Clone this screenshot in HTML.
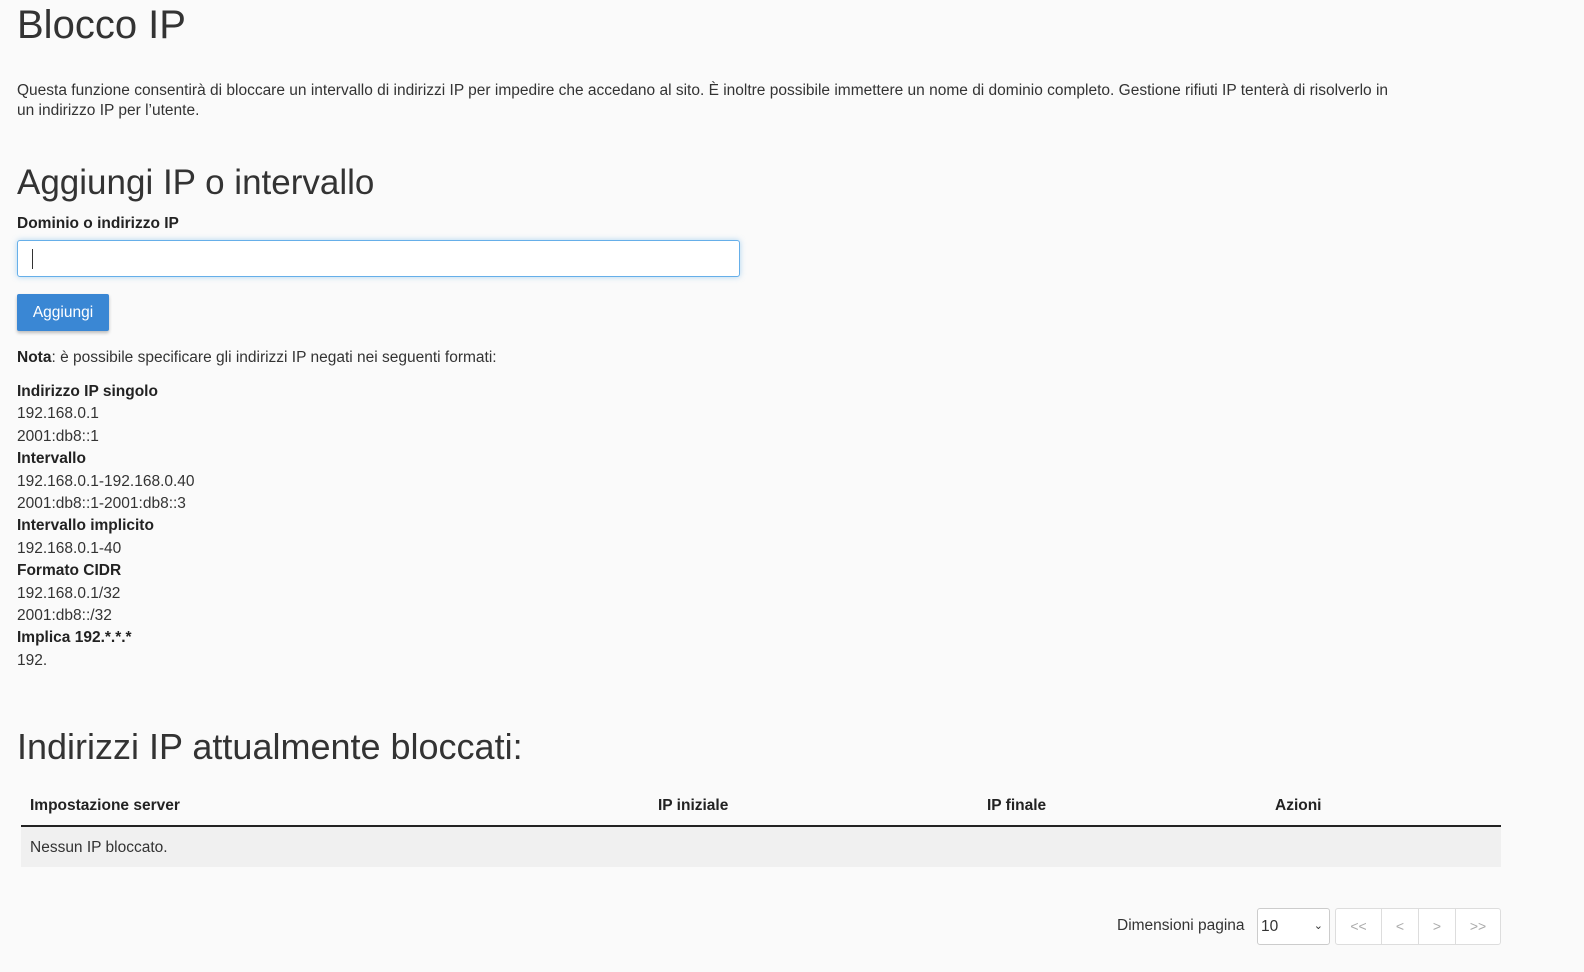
<!DOCTYPE html>
<html><head><meta charset="utf-8"><style>
body{margin:0;background:#fafafa;color:#333;font-family:"Liberation Sans",sans-serif;font-size:15px;width:1584px;height:972px;overflow:hidden;position:relative}
.a{position:absolute;white-space:nowrap}
h1{position:absolute;left:17px;top:3px;margin:0;font-weight:300;font-size:40px;color:#333}
h2{position:absolute;left:17px;margin:0;font-weight:400;font-size:35px;color:#333}
b{color:#222}
.list{position:absolute;left:17px;top:381px;line-height:22.4px;font-size:15.5px}
</style></head><body>
<h1>Blocco IP</h1>
<div class="a" style="left:17px;top:81px;line-height:20px;font-size:15.5px;white-space:normal;width:1475px">Questa funzione consentirà di bloccare un intervallo di indirizzi IP per impedire che accedano al sito. È inoltre possibile immettere un nome di dominio completo. Gestione rifiuti IP tenterà di risolverlo in<br>un indirizzo IP per l’utente.</div>
<h2 style="top:163px">Aggiungi IP o intervallo</h2>
<div class="a" style="left:17px;top:215px;font-size:15.5px;font-weight:bold;color:#222">Dominio o indirizzo IP</div>
<div class="a" style="left:17px;top:240px;width:721px;height:35px;background:#fff;border:1px solid #66afe9;border-radius:3px;box-shadow:0 0 6px rgba(102,175,233,.5)"><div style="position:absolute;left:14px;top:8px;width:1px;height:20px;background:#333"></div></div>
<div class="a" style="left:17px;top:294px;width:92px;height:37px;background:#3a87d4;border-radius:2px;box-shadow:0 2px 3px rgba(0,0,0,.25);color:#fff;font-size:15.5px;line-height:37px;text-align:center">Aggiungi</div>
<div class="a" style="left:17px;top:349px;font-size:15.5px"><b>Nota</b>: è possibile specificare gli indirizzi IP negati nei seguenti formati:</div>
<div class="list"><b>Indirizzo IP singolo</b><br>192.168.0.1<br>2001:db8::1<br><b>Intervallo</b><br>192.168.0.1-192.168.0.40<br>2001:db8::1-2001:db8::3<br><b>Intervallo implicito</b><br>192.168.0.1-40<br><b>Formato CIDR</b><br>192.168.0.1/32<br>2001:db8::/32<br><b>Implica 192.*.*.*</b><br>192.</div>
<h2 style="top:726px;font-size:36px">Indirizzi IP attualmente bloccati:</h2>
<div class="a" style="left:21px;top:825px;width:1480px;height:2px;background:#222"></div>
<div class="a" style="left:21px;top:827px;width:1480px;height:40px;background:#f0f0f0"></div>
<div class="a" style="left:30px;top:797px;font-weight:bold;font-size:15.5px;color:#222">Impostazione server</div>
<div class="a" style="left:658px;top:797px;font-weight:bold;font-size:15.5px;color:#222">IP iniziale</div>
<div class="a" style="left:987px;top:797px;font-weight:bold;font-size:15.5px;color:#222">IP finale</div>
<div class="a" style="left:1275px;top:797px;font-weight:bold;font-size:15.5px;color:#222">Azioni</div>
<div class="a" style="left:30px;top:839px;font-size:15.5px">Nessun IP bloccato.</div>
<div class="a" style="left:1117px;top:917px;font-size:15.5px">Dimensioni pagina</div>
<div class="a" style="left:1257px;top:908px;width:71px;height:35px;border:1px solid #ccc;border-radius:3px;background:#fff;font-size:15.5px;line-height:35px;text-indent:3px">10<span style="position:absolute;right:6px;font-size:11px">&#8964;</span></div>
<div class="a" style="left:1335px;top:908px;width:164px;height:35px;border:1px solid #ddd;border-radius:3px;background:#fff;display:flex;color:#aaa;font-size:14px;line-height:35px">
<div style="width:45px;text-align:center;border-right:1px solid #ddd">&lt;&lt;</div><div style="width:36px;text-align:center;border-right:1px solid #ddd">&lt;</div><div style="width:36px;text-align:center;border-right:1px solid #ddd">&gt;</div><div style="flex:1;text-align:center">&gt;&gt;</div></div>
</body></html>
